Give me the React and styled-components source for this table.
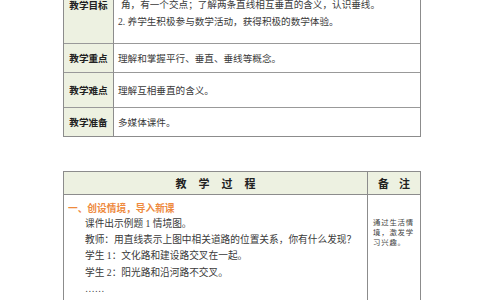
import React from 'react';
import styled, {createGlobalStyle} from 'styled-components';

const GlobalStyle = createGlobalStyle`
  html, body {
    margin: 0;
    padding: 0;
    background: #fff;
    overflow: hidden;
  }
  body {
    font-family: "Liberation Serif", "Noto Sans CJK SC", serif;
    color: #333;
  }
`

const Page = styled.div`
  width: 484px;
  height: 300px;
  overflow: hidden;
  padding-left: 63px;
  box-sizing: border-box;
`

const InfoTable = styled.div`
  width: 358px;
  margin-top: -42px;
  display: grid;
  grid-template-columns: 50px 1fr;
  border: 1px solid #8c8c8c;
  border-top: none;
  box-sizing: border-box;
`

const Label = styled.div`
  background: #edf1e1;
  border-right: 1px solid #8c8c8c;
  border-bottom: ${p => p.last ? 'none' : '1px solid #999'};
  height: ${p => p.h}px;
  padding-top: ${p => p.shift || 0}px;
  box-sizing: border-box;
  display: flex;
  align-items: center;
  justify-content: center;
  font-family: "Noto Sans CJK SC", sans-serif;
  font-weight: 700;
  font-size: 9.6px;
  color: #222;
`

const Content = styled.div`
  border-bottom: ${p => p.last ? 'none' : '1px solid #999'};
  height: ${p => p.h}px;
  box-sizing: border-box;
  padding: ${p => p.top != null ? `${p.top}px 4px 0` : '0 4px'};
  display: flex;
  flex-direction: column;
  justify-content: ${p => p.top != null ? 'flex-start' : 'center'};
  font-size: 9.6px;
  color: #3a3a3a;
`

const Line = styled.div`
  line-height: 17px;
  white-space: nowrap;
  padding-left: ${p => p.indent || 0}px;
`

const ProcessTable = styled.div`
  width: 358px;
  margin-top: 34px;
  display: grid;
  grid-template-columns: 1fr 52px;
  border: 1px solid #8c8c8c;
  border-bottom: none;
  box-sizing: border-box;
`

const HeadCell = styled.div`
  height: 23px;
  background: #edf1e1;
  border-bottom: 1px solid #8c8c8c;
  border-right: ${p => p.divider ? '1px solid #8c8c8c' : 'none'};
  box-sizing: border-box;
  display: flex;
  align-items: center;
  justify-content: center;
  gap: ${p => p.gap}px;
  font-family: "Noto Sans CJK SC", sans-serif;
  font-weight: 700;
  font-size: 11px;
  color: #222;
`

const ProcessBody = styled.div`
  height: 120px;
  border-right: 1px solid #8c8c8c;
  padding: 5px 4px 0;
  font-size: 9.7px;
  color: #3a3a3a;
`

const StepTitle = styled.div`
  line-height: 16px;
  font-family: "Noto Sans CJK SC", sans-serif;
  font-weight: 700;
  color: #ee8a3e;
`

const StepLine = styled.div`
  line-height: 16.2px;
  padding-left: 17px;
  white-space: nowrap;
`

const Note = styled.div`
  padding: 23px 3px 0 5px;
  font-size: 7.4px;
  line-height: 10px;
  letter-spacing: 0.8px;
  color: #444;
`

const rows = [
  {label: '教学重点', h: 29, text: '理解和掌握平行、垂直、垂线等概念。'},
  {label: '教学难点', h: 35, text: '理解互相垂直的含义。'},
  {label: '教学准备', h: 28, text: '多媒体课件。'},
];

export default function App() {
  return (
    <Page>
      <GlobalStyle/>
      <InfoTable>
        <Label h={86} shift={8}>教学目标</Label>
        <Content h={86} top={38}>
          <Line indent={3}>角，有一个交点；了解两条直线相互垂直的含义，认识垂线。</Line>
          <Line>2. 养学生积极参与数学活动，获得积极的数学体验。</Line>
        </Content>
        {rows.map((r, i) => (
          <React.Fragment key={r.label}>
            <Label h={r.h} last={i === rows.length - 1}>{r.label}</Label>
            <Content h={r.h} last={i === rows.length - 1}>
              <Line>{r.text}</Line>
            </Content>
          </React.Fragment>
        ))}
      </InfoTable>

      <ProcessTable>
        <HeadCell divider gap={12}>
          <span>教</span><span>学</span><span>过</span><span>程</span>
        </HeadCell>
        <HeadCell gap={10}>
          <span>备</span><span>注</span>
        </HeadCell>
        <ProcessBody>
          <StepTitle>一、创设情境，导入新课</StepTitle>
          <StepLine>课件出示例题 1 情境图。</StepLine>
          <StepLine>教师：用直线表示上图中相关道路的位置关系，你有什么发现？</StepLine>
          <StepLine>学生 1：文化路和建设路交叉在一起。</StepLine>
          <StepLine>学生 2：阳光路和沿河路不交叉。</StepLine>
          <StepLine>……</StepLine>
        </ProcessBody>
        <Note>通过生活情境，激发学习兴趣。</Note>
      </ProcessTable>
    </Page>
  );
}
